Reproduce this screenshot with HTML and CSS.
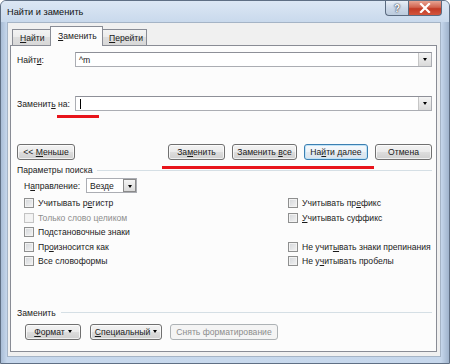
FILE: index.html
```html
<!DOCTYPE html>
<html lang="ru">
<head>
<meta charset="utf-8">
<title>Найти и заменить</title>
<link rel="stylesheet" href="styles.css">
</head>
<body>
<div class="window">
  <div class="titlebar">
    <span class="title">Найти и заменить</span>
    <div class="caption">
      <div class="cap help">?</div>
      <div class="cap close">
        <svg width="12" height="10" viewBox="0 0 12 10"><path d="M2 1 L10 9 M10 1 L2 9" stroke="#fff" stroke-width="2.2" stroke-linecap="square"/></svg>
      </div>
    </div>
  </div>
  <div class="client">
    <div class="tabs">
      <div class="tab"><span><u>Н</u>айти</span></div>
      <div class="tab active"><span><u>З</u>аменить</span></div>
      <div class="tab"><span><u>П</u>ерейти</span></div>
    </div>
    <div class="panel">
      <div class="field first">
        <span class="label">Найт<u>и</u>:</span>
        <div class="combo"><span class="val">^m</span><span class="drop"></span></div>
      </div>
      <div class="field second">
        <span class="label">Заменит<u>ь</u> на:</span>
        <div class="combo"><span class="caret"></span><span class="drop"></span></div>
      </div>
      <div class="btnrow">
        <div class="btn w58"><span>&lt;&lt; <u>М</u>еньше</span></div>
        <div class="spacer"></div>
        <div class="btn w57"><span>За<u>м</u>енить</span></div>
        <div class="btn w65"><span>Заменить <u>в</u>се</span></div>
        <div class="btn w64 default"><span>На<u>й</u>ти далее</span></div>
        <div class="btn w57"><span>Отмена</span></div>
      </div>
      <div class="group g1"><span>Параметры поиска</span><i></i></div>
      <div class="direction">
        <span class="dlabel">Н<u>а</u>правление:</span>
        <div class="select"><span class="val">Везде</span><span class="drop"></span></div>
      </div>
      <div class="checks">
        <div class="col left">
          <div class="chk"><span class="box"></span><span>Учитывать р<u>е</u>гистр</span></div>
          <div class="chk disabled"><span class="box"></span><span>Только слово целиком</span></div>
          <div class="chk"><span class="box"></span><span>Подстановочные знаки</span></div>
          <div class="chk"><span class="box"></span><span>Пр<u>о</u>износится как</span></div>
          <div class="chk"><span class="box"></span><span>Все словоформы</span></div>
        </div>
        <div class="col">
          <div class="chk"><span class="box"></span><span>Учитывать пр<u>е</u>фикс</span></div>
          <div class="chk"><span class="box"></span><span><u>У</u>читывать суффикс</span></div>
          <div class="chk empty"></div>
          <div class="chk"><span class="box"></span><span>Не учит<u>ы</u>вать знаки препинания</span></div>
          <div class="chk"><span class="box"></span><span>Не у<u>ч</u>итывать пробелы</span></div>
        </div>
      </div>
      <div class="group g2"><span>Заменить</span><i></i></div>
      <div class="btnrow bottom">
        <div class="btn w56"><span><u>Ф</u>ормат</span><b class="arr"></b></div>
        <div class="btn w72"><span><u>С</u>пециальный</span><b class="arr"></b></div>
        <div class="btn w108 off"><span>Снять форматирование</span></div>
      </div>
    </div>
  </div>
  <div class="mark m1"></div>
  <div class="mark m2"></div>
</div>
</body>
</html>
```
FILE: styles.css
```css
* { box-sizing: border-box; }
html, body { margin: 0; padding: 0; background: #fff; }
body { font-family: "Liberation Sans", Arial, sans-serif; font-size: 8.6px; color: #1a1a1a; }
u { text-decoration: underline; text-underline-offset: 1px; }

.window {
  position: relative;
  width: 450px; height: 364px;
  background: linear-gradient(90deg, #a9bdd6 0, #c6d7ec 6px, #c8d9ed 50%, #c6d7ec calc(100% - 8px), #9fb3cc 100%);
  border: 1px solid #5f6f84;
  border-radius: 6px 6px 0 0;
  display: flex; flex-direction: column;
  overflow: hidden;
}
.titlebar {
  height: 21px; flex-shrink: 0;
  display: flex; align-items: flex-start;
  background: linear-gradient(#dce7f4, #c9d9ec);
}
.title { font-size: 9.2px; padding: 6px 0 0 6px; color: #111; }
.caption { margin-left: auto; margin-right: 7px; display: flex; }
.cap { height: 15px; display: flex; align-items: center; justify-content: center; border: 1px solid #5b6b80; border-top: none; }
.help { width: 23px; border-radius: 0 0 0 4px; border-right: none; background: linear-gradient(#e9eff7, #ccd8e8 50%, #bccbdd); font-size: 10px; font-weight: bold; color: #fff; text-shadow: 0 0 2px #334, 0 0 1px #223; }
.close { width: 34px; border-radius: 0 0 4px 0; background: linear-gradient(#e8a493, #d1634f 45%, #c23a25 55%, #d3553d); }

.client {
  flex: 1;
  margin: 0 8px 6px 6px;
  background: #f0f0f0;
  border: 1px solid #a5b4c6;
  padding: 3px 3px 4px 2px;
  display: flex; flex-direction: column;
}
.tabs { display: flex; align-items: flex-end; height: 19px; flex-shrink: 0; padding-left: 2px; position: relative; z-index: 1; }
.tab {
  height: 16px; padding: 0 0 0 7px; display: flex; align-items: center;
  border: 1px solid #898c95; border-bottom: none;
  background: linear-gradient(#f3f3f3, #ebebeb 50%, #dedede 50%, #d8d8d8);
  margin-right: -1px;
}
.tab:nth-child(1) { width: 39px; }
.tab:nth-child(3) { width: 46px; margin-left: -1px; }
.tab.active { width: 53px; height: 20px; background: #fcfcfc; margin-bottom: -1px; padding-bottom: 2px; position: relative; z-index: 2; }

.panel {
  flex: 1;
  background: #fcfcfc;
  border: 1px solid #898c95;
  padding: 6px 4px 0 6px;
  display: flex; flex-direction: column;
}
.field { display: flex; align-items: center; height: 15px; }
.field.second { margin-top: 29px; }
.label { width: 58px; }
.combo {
  flex: 1; height: 15px; position: relative;
  border: 1px solid #abadb3; border-top-color: #8e9098; background: #fff;
  display: flex; align-items: center; padding-left: 3px;
}
.caret { width: 1px; height: 10px; background: #000; margin-left: 1px; }
.drop {
  position: absolute; right: 0; top: 0; bottom: 0; width: 13px;
  border-left: 1px solid #c6c6c6;
  background: linear-gradient(#f4f4f4, #dadada);
}
.drop::after {
  content: ""; position: absolute; left: 4px; top: 5px;
  border-left: 2.5px solid transparent; border-right: 2.5px solid transparent; border-top: 3px solid #000;
}

.btnrow { display: flex; gap: 7px; margin-top: 33px; height: 16px; }
.spacer { flex: 1; }
.btn {
  height: 16px; display: flex; align-items: center; justify-content: center; flex-shrink: 0;
  border: 1px solid #707070; border-radius: 3px;
  background: linear-gradient(#f2f2f2, #ebebeb 48%, #dddddd 52%, #cfcfcf);
  box-shadow: inset 0 0 0 1px rgba(255,255,255,.7);
  white-space: nowrap;
}
.btn.default { border-color: #3c7fb1; box-shadow: inset 0 0 0 1px #bfe3f8; background: linear-gradient(#f6f9fc, #eef3f8 48%, #e2e9f0 52%, #dae3ec); }
.btn.off { color: #8d8d8d; border-color: #adb2b5; background: #f4f4f4; box-shadow: none; }
.w56 { width: 56px; } .w57 { width: 57px; } .w58 { width: 58px; } .w64 { width: 64px; }
.w65 { width: 65px; } .w72 { width: 72px; } .w108 { width: 108px; }
.arr { display: inline-block; margin-left: 3px; border-left: 2px solid transparent; border-right: 2px solid transparent; border-top: 3px solid #000; }

.group { display: flex; align-items: center; height: 12px; gap: 5px; }
.group i { flex: 1; height: 1px; background: #d5dfe5; }
.g1 { margin-top: 4px; }
.g2 { margin-top: 38px; }

.direction { display: flex; align-items: center; margin-top: 2px; padding-left: 7px; height: 15px; }
.dlabel { width: 62px; }
.select {
  width: 51px; height: 15px; position: relative;
  border: 1px solid #abadb3; background: #fff;
  display: flex; align-items: center; padding-left: 3px;
}
.select .drop { width: 13px; border: 1px solid #8a8a8a; }

.checks { display: flex; margin-top: 3px; padding-left: 7px; }
.col { display: flex; flex-direction: column; }
.col.left { width: 264px; flex-shrink: 0; }
.chk { height: 14.5px; display: flex; align-items: center; white-space: nowrap; }
.box {
  width: 10px; height: 10px; margin-right: 4px; flex-shrink: 0;
  border: 1px solid #8e8f8f;
  background: linear-gradient(135deg, #d2d5d9, #f4f4f4);
  box-shadow: inset 0 0 0 1px #f2f2f2;
}
.chk.disabled { color: #8d8d8d; }
.chk.disabled .box { border-color: #c3c3c3; background: #f4f4f4; }

.bottom { margin-top: 5px; padding-left: 8px; gap: 9px; }
.bottom .w108 { margin-left: -1px; }

.mark { position: absolute; background: #e8141b; height: 3px; }
.m1 { left: 56px; top: 114px; width: 42px; }
.m2 { left: 161px; top: 165px; width: 212px; }
```
